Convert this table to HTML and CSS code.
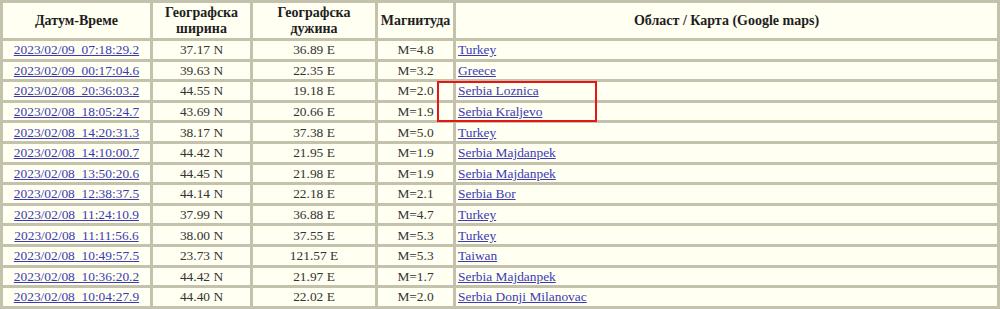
FILE: index.html
```html
<!DOCTYPE html>
<html lang="sr">
<head>
<meta charset="utf-8">
<title>Земљотреси</title>
<link rel="stylesheet" href="styles.css">
</head>
<body>
<div class="page">
<table class="quakes">
  <colgroup>
    <col class="c-date"><col class="c-lat"><col class="c-lon"><col class="c-mag"><col class="c-area">
  </colgroup>
  <thead>
    <tr>
      <th>Датум-Време</th>
      <th>Географска<br>ширина</th>
      <th>Географска<br>дужина</th>
      <th>Магнитуда</th>
      <th>Област / Карта (Google maps)</th>
    </tr>
  </thead>
  <tbody>
    <tr><td class="ctr"><a href="#">2023/02/09_07:18:29.2</a></td><td class="ctr">37.17 N</td><td class="ctr">36.89 E</td><td class="ctr">M=4.8</td><td><a href="#">Turkey</a></td></tr>
    <tr><td class="ctr"><a href="#">2023/02/09_00:17:04.6</a></td><td class="ctr">39.63 N</td><td class="ctr">22.35 E</td><td class="ctr">M=3.2</td><td><a href="#">Greece</a></td></tr>
    <tr><td class="ctr"><a href="#">2023/02/08_20:36:03.2</a></td><td class="ctr">44.55 N</td><td class="ctr">19.18 E</td><td class="ctr">M=2.0</td><td><a href="#">Serbia Loznica</a></td></tr>
    <tr><td class="ctr"><a href="#">2023/02/08_18:05:24.7</a></td><td class="ctr">43.69 N</td><td class="ctr">20.66 E</td><td class="ctr">M=1.9</td><td><a href="#">Serbia Kraljevo</a></td></tr>
    <tr><td class="ctr"><a href="#">2023/02/08_14:20:31.3</a></td><td class="ctr">38.17 N</td><td class="ctr">37.38 E</td><td class="ctr">M=5.0</td><td><a href="#">Turkey</a></td></tr>
    <tr><td class="ctr"><a href="#">2023/02/08_14:10:00.7</a></td><td class="ctr">44.42 N</td><td class="ctr">21.95 E</td><td class="ctr">M=1.9</td><td><a href="#">Serbia Majdanpek</a></td></tr>
    <tr><td class="ctr"><a href="#">2023/02/08_13:50:20.6</a></td><td class="ctr">44.45 N</td><td class="ctr">21.98 E</td><td class="ctr">M=1.9</td><td><a href="#">Serbia Majdanpek</a></td></tr>
    <tr><td class="ctr"><a href="#">2023/02/08_12:38:37.5</a></td><td class="ctr">44.14 N</td><td class="ctr">22.18 E</td><td class="ctr">M=2.1</td><td><a href="#">Serbia Bor</a></td></tr>
    <tr><td class="ctr"><a href="#">2023/02/08_11:24:10.9</a></td><td class="ctr">37.99 N</td><td class="ctr">36.88 E</td><td class="ctr">M=4.7</td><td><a href="#">Turkey</a></td></tr>
    <tr><td class="ctr"><a href="#">2023/02/08_11:11:56.6</a></td><td class="ctr">38.00 N</td><td class="ctr">37.55 E</td><td class="ctr">M=5.3</td><td><a href="#">Turkey</a></td></tr>
    <tr><td class="ctr"><a href="#">2023/02/08_10:49:57.5</a></td><td class="ctr">23.73 N</td><td class="ctr">121.57 E</td><td class="ctr">M=5.3</td><td><a href="#">Taiwan</a></td></tr>
    <tr><td class="ctr"><a href="#">2023/02/08_10:36:20.2</a></td><td class="ctr">44.42 N</td><td class="ctr">21.97 E</td><td class="ctr">M=1.7</td><td><a href="#">Serbia Majdanpek</a></td></tr>
    <tr><td class="ctr"><a href="#">2023/02/08_10:04:27.9</a></td><td class="ctr">44.40 N</td><td class="ctr">22.02 E</td><td class="ctr">M=2.0</td><td><a href="#">Serbia Donji Milanovac</a></td></tr>
  </tbody>
</table>
<div class="highlight"></div>
</div>
</body>
</html>
```

FILE: styles.css
```css
html, body {
  margin: 0;
  padding: 0;
  background: #fffff2;
}
.page {
  position: relative;
  width: 1000px;
  height: 309px;
  overflow: hidden;
}
.quakes {
  width: 1000px;
  table-layout: fixed;
  border-collapse: separate;
  border-spacing: 3px;
  background: #c4c1ad;
  font-family: "Liberation Serif", "Times New Roman", serif;
  font-size: 13.4px;
  color: #333333;
}
.c-date { width: 147px; }
.c-lat { width: 97px; }
.c-lon { width: 122px; }
.c-mag { width: 75px; }
.c-area { width: 541px; }
.quakes th,
.quakes td {
  background: #fffff2;
  padding: 0 2px;
  overflow: hidden;
  white-space: nowrap;
}
.quakes th {
  height: 35px;
  font-size: 14px;
  font-weight: bold;
  line-height: 16px;
  text-align: center;
  color: #1e1e1e;
  padding: 0;
}
.quakes td {
  height: 17.6px;
  line-height: 15px;
  text-align: left;
}
.quakes td.ctr {
  text-align: center;
}
.quakes a {
  color: #3b3bb8;
  text-decoration: underline;
}
.highlight {
  position: absolute;
  left: 437px;
  top: 81px;
  width: 156px;
  height: 37px;
  border: 2px solid #e41616;
}
```
